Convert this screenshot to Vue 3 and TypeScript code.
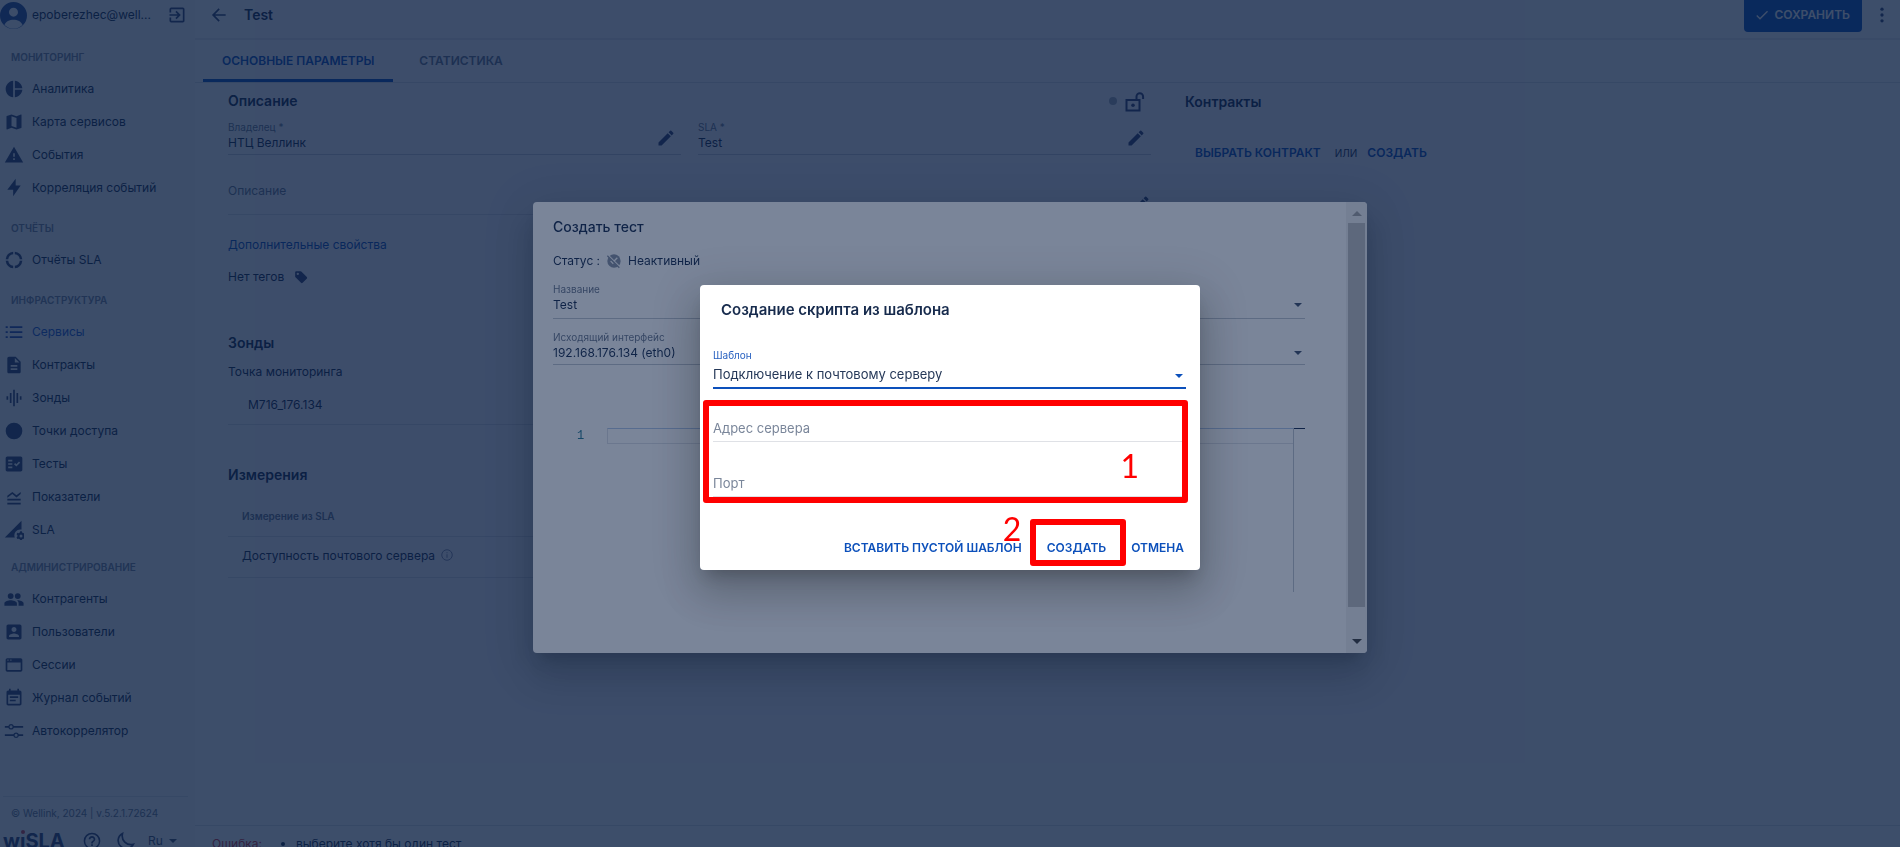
<script setup lang="ts">
import { ref } from 'vue'

interface NavItem { label: string; icon: string; link?: boolean }
interface NavGroup { title: string; tight?: boolean; items: NavItem[] }

const groups: NavGroup[] = [
  {
    title: 'МОНИТОРИНГ',
    items: [
      { label: 'Аналитика', icon: 'M11 2v20c-5.07-.5-9-4.79-9-10s3.930-9.500 9-10zm2.030 0v8.990H22c-.47-4.740-4.240-8.520-8.970-8.990zm0 11.010V22c4.740-.47 8.500-4.250 8.970-8.990h-8.970z' },
      { label: 'Карта сервисов', icon: 'M20.500 3l-.16.030L15 5.100 9 3 3.360 4.900c-.21.070-.36.250-.36.480V20.500c0 .28.220.5.500.5l.16-.03L9 18.900l6 2.100 5.640-1.900c.21-.07.360-.25.360-.48V3.500c0-.28-.22-.5-.5-.5zM15 19l-6-2.110V5l6 2.110V19z' },
      { label: 'События', icon: 'M1 21h22L12 2 1 21zm12-3h-2v-2h2v2zm0-4h-2v-4h2v4z' },
      { label: 'Корреляция событий', icon: 'M11 22V14H4L14 1v8h6z' },
    ],
  },
  {
    title: 'ОТЧЁТЫ',
    items: [
      { label: 'Отчёты SLA', icon: 'M11 5.080V2a10 10 0 0 0-9 9h3.080A7 7 0 0 1 11 5.080zM18.970 11H22a10 10 0 0 0-9-9v3.080A7 7 0 0 1 18.970 11zM13 18.920V22a10 10 0 0 0 9-9h-3.030A7 7 0 0 1 13 18.920zM11 18.920A7 7 0 0 1 5.080 13H2a10 10 0 0 0 9 9z' },
    ],
  },
  {
    title: 'ИНФРАСТРУКТУРА',
    items: [
      { label: 'Сервисы', link: true, icon: 'M2 5h2.500v2.200H2zM2 11h2.500v2.200H2zM2 17h2.500v2.200H2zM7 5h15v2.200H7zM7 11h15v2.200H7zM7 17h15v2.200H7z' },
      { label: 'Контракты', icon: 'M14 2H6c-1.100 0-2 .9-2 2v16c0 1.100.9 2 2 2h12c1.100 0 2-.9 2-2V8l-6-6zm2 16H8v-2h8v2zm0-4H8v-2h8v2zm-3-5V3.500L18.500 9H13z' },
      { label: 'Зонды', icon: 'M7 18h2V6H7v12zm4 4h2V2h-2v20zm-8-8h2v-4H3v4zm12 4h2V6h-2v12zm4-8v4h2v-4h-2z' },
      { label: 'Точки доступа', icon: 'M12 2a10 10 0 1 0 0 20a10 10 0 1 0 0-20z' },
      { label: 'Тесты', icon: 'M20 3H4c-1.100 0-2 .9-2 2v14c0 1.100.9 2 2 2h16c1.100 0 2-.9 2-2V5c0-1.100-.9-2-2-2zM10 17H5v-2h5v2zm0-4H5v-2h5v2zm0-4H5V7h5v2zm4.820 6L12 12.160l1.410-1.410 1.410 1.420L17.990 9l1.420 1.420L14.820 15z' },
      { label: 'Показатели', icon: 'M4 19h16v2H4zM4 14h16v2.300H4zM4 10.500L10 6l5 4 5-4v2.500L15 12.500l-5-4L4 13z' },
      { label: 'SLA', icon: 'M1 21L21 1v10.500a7 7 0 0 0-8 9.500zM19.400 13.500l-.4 1.500-1.400.8-1.500-.4-1 1.800 1 1.100v1.600l-1 1.100 1 1.800 1.500-.4 1.400.8.4 1.500h2l.4-1.500 1.400-.8 1.500.4 1-1.800-1-1.100v-1.600l1-1.100-1-1.800-1.500.4-1.400-.8-.4-1.500zM20.400 17.300a1.800 1.800 0 1 1 0 3.600a1.800 1.800 0 1 1 0-3.600z' },
    ],
  },
  {
    title: 'АДМИНИСТРИРОВАНИЕ',
    tight: true,
    items: [
      { label: 'Контрагенты', icon: 'M16.500 12a3.500 3.500 0 1 0 0-7a3.500 3.500 0 0 0 0 7zM8 12a3.500 3.500 0 1 0 0-7a3.500 3.500 0 0 0 0 7zM8 13.500c-2.500 0-7.500 1.200-7.500 3.700V20h15v-2.800c0-2.500-5-3.700-7.500-3.700zM16.500 13.500l-1 .05c1.200.8 2 2 2 3.650V20h6v-2.800c0-2.500-4.700-3.700-7-3.700z' },
      { label: 'Пользователи', icon: 'M3 5v14c0 1.100.89 2 2 2h14c1.100 0 2-.9 2-2V5c0-1.100-.9-2-2-2H5c-1.110 0-2 .9-2 2zm12 4c0 1.660-1.340 3-3 3s-3-1.340-3-3 1.340-3 3-3 3 1.340 3 3zm-9 8c0-2 4-3.100 6-3.100s6 1.100 6 3.100v1H6v-1z' },
      { label: 'Сессии', icon: 'M20 4H4c-1.100 0-2 .9-2 2v12c0 1.100.9 2 2 2h16c1.100 0 2-.9 2-2V6c0-1.100-.9-2-2-2zm0 14H4V9h16v9zM4 5.500h1.500V7H4zM7.500 5.500H9V7H7.500z' },
      { label: 'Журнал событий', icon: 'M17 10H7v2h10v-2zm2-7h-1V1h-2v2H8V1H6v2H5c-1.110 0-1.990.9-1.990 2L3 19c0 1.100.89 2 2 2h14c1.100 0 2-.9 2-2V5c0-1.100-.9-2-2-2zm0 16H5V8h14v11zm-5-5H7v2h7v-2z' },
      { label: 'Автокоррелятор', icon: 'M1 6h4.200a3.500 3.500 0 0 1 6.600 0H23v2H11.800a3.500 3.500 0 0 1-6.600 0H1zM8.500 5.200a1.800 1.800 0 1 0 0 3.600a1.800 1.800 0 0 0 0-3.600zM1 16h10.200a3.500 3.500 0 0 1 6.600 0H23v2h-5.200a3.500 3.500 0 0 1-6.600 0H1zM14.500 15.200a1.800 1.800 0 1 0 0 3.600a1.800 1.800 0 0 0 0-3.600z' },
    ],
  },
]

const pencil = 'M3 17.250V21h3.750L17.810 9.940l-3.750-3.750L3 17.250zM20.710 7.040a1 1 0 0 0 0-1.410l-2.340-2.340a1 1 0 0 0-1.410 0l-1.830 1.830 3.750 3.750 1.830-1.830z'

const owner = ref('НТЦ Веллинк')
const slaName = ref('Test')
const template = ref('mail')
const serverAddress = ref('')
const port = ref('')
</script>

<template>
  <div class="shell">
    <aside class="sidebar">
      <div class="account">
        <svg class="avatar" viewBox="0 0 24 24"><path fill-rule="evenodd" d="M12 0a12 12 0 1 0 0 24a12 12 0 1 0 0-24zM12 5a4 4 0 1 1 0 8a4 4 0 1 1 0-8zM4 20.500c1-3.300 4.500-4.800 8-4.800s7 1.500 8 4.800a11.500 11.500 0 0 1-16 0z" /></svg>
        <span class="account-name">epoberezhec@well...</span>
        <button class="icon-button logout" aria-label="Выйти">
          <svg viewBox="0 0 24 24" class="ic20"><path d="M10.090 15.590L11.500 17l5-5-5-5-1.410 1.410L12.670 11H3v2h9.670l-2.580 2.590zM19 3H5a2 2 0 0 0-2 2v4h2V5h14v14H5v-4H3v4a2 2 0 0 0 2 2h14c1.100 0 2-.9 2-2V5c0-1.100-.9-2-2-2z" /></svg>
        </button>
      </div>
      <nav>
        <section v-for="g in groups" :key="g.title" class="group" :class="{ tight: g.tight }">
          <h3 class="group-title">{{ g.title }}</h3>
          <a v-for="i in g.items" :key="i.label" href="#" class="nav-item" :class="{ link: i.link }">
            <svg viewBox="0 0 24 24" class="ic20"><path fill-rule="evenodd" :d="i.icon" /></svg>
            <span>{{ i.label }}</span>
          </a>
        </section>
      </nav>
      <footer class="side-footer">
        <div class="copyright">© Wellink, 2024 | v.5.2.1.72624</div>
        <div class="brand-row">
          <span class="brand">w<span class="brand-i">ı<i class="brand-dot"></i></span>SLA</span>
          <button class="icon-button" aria-label="Справка">
            <svg viewBox="0 0 24 24" class="ic20"><path d="M11 18h2v-2h-2v2zm1-16a10 10 0 1 0 0 20a10 10 0 0 0 0-20zm0 18.200a8.200 8.200 0 1 1 0-16.400a8.200 8.200 0 0 1 0 16.400zM12 6c-2.210 0-4 1.790-4 4h2c0-1.100.9-2 2-2s2 .9 2 2c0 2-3 1.750-3 5h2c0-2.250 3-2.500 3-5 0-2.210-1.790-4-4-4z" /></svg>
          </button>
          <button class="icon-button" aria-label="Тёмная тема">
            <svg viewBox="0 0 24 24" class="ic20"><path class="outline" d="M9 3C3 6 2 14 7 18.500s12 3 15-2.500C14 18 7 11 9 3z" /></svg>
          </button>
          <button class="lang">Ru <span class="caret"></span></button>
        </div>
      </footer>
    </aside>

    <main class="main">
      <header class="topbar">
        <button class="icon-button" aria-label="Назад">
          <svg viewBox="0 0 24 24" class="ic20"><path d="M20 11H7.300l5.600-5.600L11.500 4l-8 8 8 8 1.400-1.400L7.300 13H20z" /></svg>
        </button>
        <h1 class="page-title">Test</h1>
        <button class="save">
          <svg viewBox="0 0 24 24" class="ic16"><path d="M9 16.200L4.800 12l-1.400 1.400L9 19 21 7l-1.400-1.400z" /></svg>
          СОХРАНИТЬ
        </button>
        <button class="icon-button more" aria-label="Ещё">
          <svg viewBox="0 0 24 24" class="ic20"><circle cx="12" cy="5" r="2" /><circle cx="12" cy="12" r="2" /><circle cx="12" cy="19" r="2" /></svg>
        </button>
      </header>
      <div class="tabs" role="tablist">
        <button class="tab active" role="tab" aria-selected="true">ОСНОВНЫЕ ПАРАМЕТРЫ</button>
        <button class="tab" role="tab" aria-selected="false">СТАТИСТИКА</button>
      </div>
      <div class="content">
        <div class="details">
          <div class="section-head">
            <h2>Описание</h2>
            <span class="dot"></span>
            <button class="icon-button" aria-label="Разблокировано">
              <svg viewBox="0 0 24 24" class="ic24"><path class="outline" d="M3.500 11h13v10.500h-13zM13.500 11V7.500a3.300 3.300 0 0 1 6.600 0V10" /><circle cx="10" cy="16.200" r="1.800" /></svg>
            </button>
          </div>
          <div class="pair">
            <div class="field">
              <label for="owner">Владелец *</label>
              <input id="owner" v-model="owner" />
              <button class="icon-button edit" aria-label="Изменить владельца"><svg viewBox="0 0 24 24" class="ic20"><path :d="pencil" /></svg></button>
            </div>
            <div class="field">
              <label for="sla">SLA *</label>
              <input id="sla" v-model="slaName" />
              <button class="icon-button edit" aria-label="Изменить SLA"><svg viewBox="0 0 24 24" class="ic20"><path :d="pencil" /></svg></button>
            </div>
          </div>
          <div class="note">
            <input placeholder="Описание" aria-label="Описание" />
            <button class="icon-button" aria-label="Изменить описание"><svg viewBox="0 0 24 24" class="ic20"><path :d="pencil" /></svg></button>
          </div>
          <a href="#" class="more-props">Дополнительные свойства</a>
          <div class="tags">
            Нет тегов
            <svg viewBox="0 0 24 24" class="ic14"><path fill-rule="evenodd" d="M22 12L12.500 2.600A2 2 0 0 0 11 2H4a2 2 0 0 0-2 2v7c0 .6.200 1 .6 1.500l9.400 9.400a2 2 0 0 0 2.800 0l7-7a2 2 0 0 0 .2-2.900zM6.500 8.500a2 2 0 1 1 0-4a2 2 0 0 1 0 4z" /></svg>
          </div>
          <h2 class="probes">Зонды</h2>
          <div class="caption">Точка мониторинга</div>
          <div class="probe">M716_176.134</div>
          <h2 class="measures">Измерения</h2>
          <table>
            <thead><tr><th>Измерение из SLA</th></tr></thead>
            <tbody>
              <tr><td>Доступность почтового сервера
                <svg viewBox="0 0 24 24" class="ic12"><circle class="outline" cx="12" cy="12" r="10.500" /><path d="M11 10.500h2v7h-2zM11 6.500h2v2.200h-2z" /></svg></td></tr>
            </tbody>
          </table>
        </div>
        <aside class="contracts">
          <h2>Контракты</h2>
          <div class="contract-actions">
            <button class="text-button">ВЫБРАТЬ КОНТРАКТ</button>
            <span class="or">ИЛИ</span>
            <button class="text-button">СОЗДАТЬ</button>
          </div>
        </aside>
      </div>
      <footer class="errors">
        <span class="error">Ошибка:</span>
        <ul><li>выберите хотя бы один тест</li></ul>
      </footer>
    </main>

    <div class="overlay">
      <section class="dialog test-dialog" role="dialog" aria-labelledby="test-title">
        <div class="test-body">
          <h2 id="test-title">Создать тест</h2>
          <div class="status">
            Статус :
            <svg viewBox="0 0 24 24" class="ic16"><circle cx="12" cy="12" r="10" /><path class="cut" d="M1 1l22 22M7 12l4 4M11 13l6-6" /><path class="slash" d="M2 4l18 18" /></svg>
            <span>Неактивный</span>
          </div>
          <div class="select-field name-field">
            <label for="name">Название</label>
            <select id="name"><option>Test</option></select>
          </div>
          <div class="select-field">
            <label for="iface">Исходящий интерфейс</label>
            <select id="iface"><option>192.168.176.134 (eth0)</option></select>
          </div>
          <div class="editor">
            <div class="gutter">1</div>
            <div class="code"><div class="line"></div></div>
            <div class="ruler"></div>
          </div>
        </div>
        <div class="scrollbar">
          <span class="arrow up"></span>
          <span class="thumb"></span>
          <span class="arrow down"></span>
        </div>
      </section>
    </div>

    <div class="overlay">
      <section class="dialog script-dialog" role="dialog" aria-labelledby="script-title">
        <h2 id="script-title">Создание скрипта из шаблона</h2>
        <div class="select-field focused">
          <label for="template">Шаблон</label>
          <select id="template" v-model="template"><option value="mail">Подключение к почтовому серверу</option></select>
        </div>
        <div class="params">
          <input v-model="serverAddress" placeholder="Адрес сервера" aria-label="Адрес сервера" />
          <input v-model="port" placeholder="Порт" aria-label="Порт" />
          <div class="mark mark-params"></div>
          <span class="digit digit-one">1</span>
        </div>
        <div class="actions">
          <button class="text-button">ВСТАВИТЬ ПУСТОЙ ШАБЛОН</button>
          <span class="create">
            <button class="text-button">СОЗДАТЬ</button>
            <span class="mark mark-create"></span>
            <span class="digit digit-two">2</span>
          </span>
          <button class="text-button">ОТМЕНА</button>
        </div>
      </section>
    </div>
  </div>
</template>

<style>
html, body { margin: 0; height: 100%; overflow: hidden; }
</style>

<style scoped>
* { box-sizing: border-box; }
.shell {
  --ink: #172b4d;
  --muted: #7a869a;
  --icon: #344570;
  --primary: #0c50bb;
  --rule: #dfe1e6;
  display: flex;
  height: 100vh;
  overflow: hidden;
  background: #fff;
  color: var(--ink);
  font: 400 12px/16px Inter, "Liberation Sans", sans-serif;
}
h1, h2, h3 { margin: 0; font-weight: 600; }
h2 { font-size: 14px; line-height: 20px; }
button, input, select { font: inherit; color: inherit; border: 0; background: none; padding: 0; margin: 0; outline: 0; }
a { color: inherit; text-decoration: none; }
svg { display: block; flex: none; fill: var(--icon); }
.outline { fill: none; stroke: var(--icon); stroke-width: 2; }
.ic12 { width: 12px; height: 12px; }
.ic14 { width: 14px; height: 14px; }
.ic16 { width: 16px; height: 16px; }
.ic20 { width: 20px; height: 20px; }
.ic24 { width: 24px; height: 24px; }
.icon-button { display: flex; flex: none; }

.sidebar { display: flex; flex-direction: column; flex: none; width: 195px; background: #f7f8fa; }
.account { display: flex; align-items: center; height: 30px; padding-right: 8px; }
.avatar { width: 27px; height: 27px; fill: #2a509a; }
.account-name { margin-left: 5px; }
.logout { margin-left: auto; }
nav { flex: 1; padding-top: 3px; }
.group { padding-top: 16px; }
.group.tight { padding-top: 13px; }
.group-title { margin-bottom: 6px; padding-left: 11px; font-size: 10px; line-height: 17px; color: var(--muted); }
.nav-item { display: flex; align-items: center; gap: 8px; height: 33px; padding-left: 4px; }
.nav-item.link { color: #1e5bd0; }
.nav-item.link svg { fill: #2a4fb0; }
.side-footer { flex: none; height: 51px; margin: 0 7px 0 3px; border-top: 1px solid var(--rule); overflow: hidden; }
.copyright { padding: 8px 0 0 8px; font-size: 10px; line-height: 16px; color: #6b778c; }
.brand-row { display: flex; align-items: center; height: 32px; margin-top: 4px; }
.brand { width: 79px; font-size: 20px; line-height: 24px; font-weight: 700; color: var(--icon); }
.brand-i { position: relative; }
.brand-dot { position: absolute; left: 1px; top: 1px; width: 4px; height: 4px; border-radius: 50%; background: #d0404a; }
.brand-row .icon-button { margin-right: 13px; }
.lang { display: flex; align-items: center; gap: 6px; color: #42526e; }
.caret { border: 4px solid transparent; border-top-color: currentColor; border-bottom: 0; }

.main { display: flex; flex-direction: column; flex: 1; min-width: 0; }
.topbar { display: flex; align-items: center; flex: none; height: 40px; padding: 0 8px 8px 14px; border-bottom: 2px solid #ebecf0; }
.page-title { margin-left: 15px; font-size: 14px; line-height: 20px; }
.save { display: flex; align-items: center; gap: 4px; align-self: flex-start; height: 32px; margin-left: auto; padding: 0 12px 2px 10px; border-radius: 0 0 4px 4px; background: var(--primary); color: #fff; font-weight: 600; }
.save svg { fill: #fff; }
.more { margin-left: 10px; }
.tabs { display: flex; flex: none; height: 43px; padding-left: 8px; border-bottom: 1px solid var(--rule); }
.tab { padding: 2px 26px 0; border-bottom: 3px solid transparent; color: #6b778c; font-weight: 600; }
.tab.active { padding: 2px 19px 0; border-color: var(--primary); color: var(--primary); }
.content { display: flex; flex: 1; min-height: 0; padding-left: 33px; overflow: hidden; }
.details { flex: 0 0 923px; padding-top: 6px; }
.section-head { display: flex; align-items: center; height: 24px; padding-right: 4px; }
.section-head h2 { margin-right: auto; }
.dot { width: 8px; height: 8px; margin-right: 6px; border-radius: 50%; background: #a5adba; }
.pair { display: grid; grid-template-columns: 1fr 1fr; gap: 17px; margin-top: 6px; }
.field { position: relative; display: flex; flex-direction: column; border-bottom: 1px solid #c9ced8; padding-bottom: 3px; }
.field label, .select-field label { font-size: 10px; line-height: 16px; color: #6b778c; }
.field input { height: 16px; }
.edit { position: absolute; right: 5px; top: 9px; }
.note { display: flex; align-items: flex-end; height: 60px; border-bottom: 1px solid var(--rule); }
.note input { flex: 1; height: 48px; }
.note input::placeholder { color: #6b778c; opacity: 1; }
.more-props { display: block; margin-top: 22px; color: var(--primary); }
.tags { display: flex; align-items: center; gap: 10px; margin-top: 16px; }
.probes { margin-top: 48px; }
.caption { margin-top: 11px; }
.probe { height: 45px; padding: 17px 20px 0; border-bottom: 1px solid var(--rule); }
.measures { margin: 40px 0 12px; }
table { width: 100%; border-collapse: collapse; text-align: left; }
th, td { height: 39px; padding: 0 14px; border-bottom: 1px solid var(--rule); }
th { font-size: 10px; font-weight: 600; color: #6b778c; }
td { height: 41px; padding-bottom: 2px; }
td svg { display: inline-block; margin-left: 3px; vertical-align: -1px; opacity: .6; }
.contracts { padding: 9px 0 0 34px; }
.contract-actions { display: flex; align-items: center; padding: 33px 0 0 10px; }
.text-button { color: var(--primary); font-weight: 600; }
.or { margin: 0 10px 0 14px; font-size: 10px; }
.errors { display: flex; flex: none; height: 22px; padding: 10px 0 0 17px; border-top: 1px solid var(--rule); overflow: hidden; }
.error { color: #d0303a; }
.errors ul { margin: 0; padding-left: 34px; }

.overlay { position: fixed; inset: 0; display: flex; align-items: center; justify-content: center; padding-top: 8px; background: rgba(9, 30, 66, .54); }
.dialog { position: relative; border-radius: 4px; background: #fff; box-shadow: 0 11px 15px -7px rgba(0, 0, 0, .2), 0 24px 38px 3px rgba(0, 0, 0, .14), 0 9px 46px 8px rgba(0, 0, 0, .12); }
.test-dialog { display: flex; width: 834px; height: 451px; overflow: hidden; }
.test-body { flex: 1; padding: 15px 41px 0 20px; }
.test-dialog h2 { font-size: 14px; font-weight: 500; }
.status { display: flex; align-items: center; gap: 6px; margin-top: 16px; }
.status svg { fill: #8993a4; }
.cut { fill: none; stroke: #fff; stroke-width: 2; }
.slash { stroke: #8993a4; stroke-width: 2; }
.select-field { position: relative; display: flex; flex-direction: column; border-bottom: 1px solid #c1c7d0; padding-bottom: 3px; margin-top: 10px; }
.select-field select { appearance: none; height: 16px; }
.select-field::after { content: ""; position: absolute; right: 3px; bottom: 9px; border: 4px solid transparent; border-top-color: #42526e; border-bottom: 0; }
.name-field { margin-top: 12px; padding-bottom: 5px; }
.name-field::after { bottom: 11px; }
.editor { display: flex; height: 164px; margin-top: 63px; }
.gutter { width: 54px; padding-left: 24px; font: 12px/16px "Liberation Mono", monospace; color: #237893; }
.code { flex: 1; border-right: 1px solid #c1c7d0; }
.line { height: 16px; border: 1px solid #dfe1e6; border-right: 0; border-top-color: #b4c8ea; }
.ruler { width: 11px; height: 1px; background: var(--ink); }
.scrollbar { display: flex; flex-direction: column; align-items: center; width: 21px; padding: 9px 0; background: #f1f1f1; }
.arrow { border: 5px solid transparent; }
.up { border-top: 0; border-bottom-color: #a3a3a3; }
.thumb { width: 17px; height: 384px; margin: 7px 0 auto; background: #c1c1c1; }
.down { border-bottom: 0; border-top-color: #404040; }

.script-dialog { width: 500px; height: 285px; padding: 15px 14px 0 13px; }
.script-dialog h2 { padding-left: 8px; font-size: 15px; }
.focused { margin-top: 27px; border-bottom: 2px solid var(--primary); padding-bottom: 3px; }
.focused label { color: #2861c0; }
.focused select { height: 21px; font-size: 13px; color: #253858; }
.focused::after { bottom: 9px; border-top-color: var(--primary); }
.params { position: relative; display: grid; row-gap: 23px; padding-top: 21px; }
.params input { height: 32px; padding-top: 4px; border-bottom: 1px solid var(--rule); font-size: 13px; }
.params input::placeholder { color: #7a869a; opacity: 1; }
.mark { position: absolute; border: 6px solid #f00; border-radius: 3px; pointer-events: none; }
.mark-params { left: -10px; right: -2px; top: 11px; bottom: -6px; }
.digit { position: absolute; font: 32px/24px Lato, sans-serif; color: #f00; }
.digit-one { right: 47px; top: 65px; }
.actions { display: flex; align-items: center; justify-content: flex-end; gap: 25px; margin-top: 43px; padding-right: 2px; }
.create { position: relative; display: flex; }
.mark-create { left: -17px; right: -20px; top: -21px; bottom: -10px; }
.digit-two { left: -44px; top: -23px; }
</style>
